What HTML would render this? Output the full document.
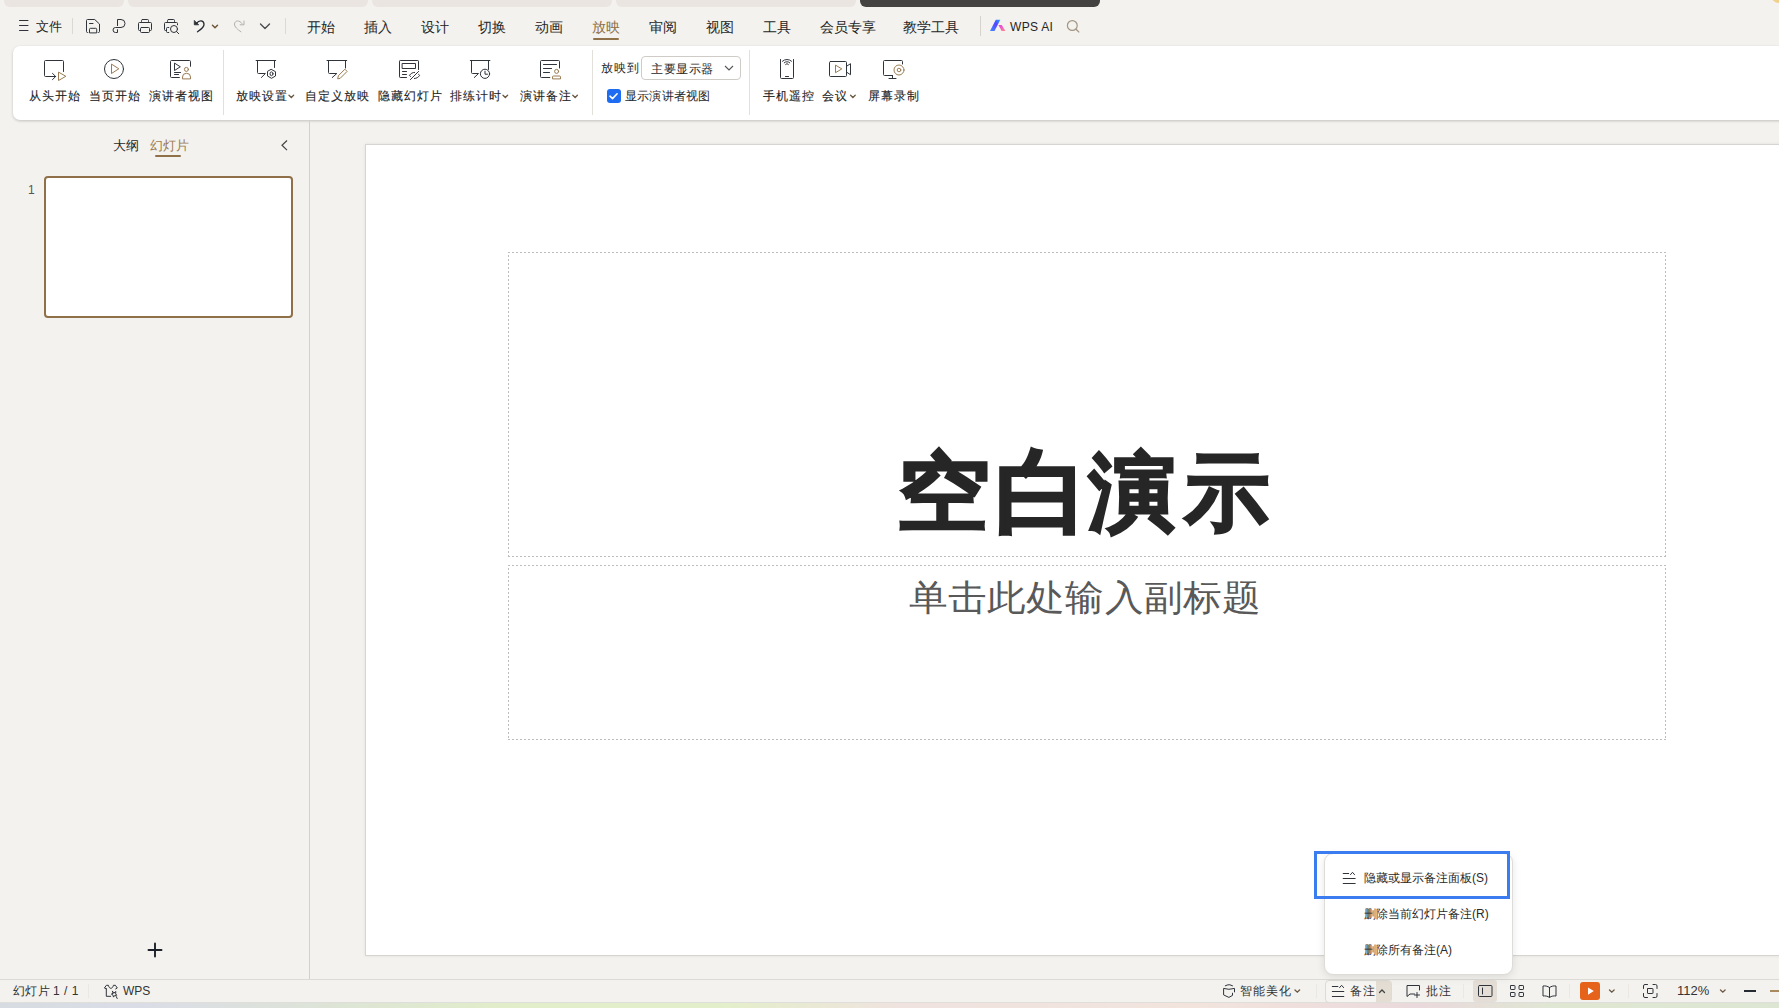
<!DOCTYPE html>
<html><head><meta charset="utf-8">
<style>
*{box-sizing:border-box;margin:0;padding:0}
html,body{width:1779px;height:1008px;overflow:hidden;background:#f3f2ee;font-family:"Liberation Sans",sans-serif;color:#262626}
.a{position:absolute}
.t{position:absolute;white-space:nowrap;line-height:1}
.tab{position:absolute;top:0;height:7px;background:#eae5e0;border-radius:0 0 6px 6px}
.sep{position:absolute;width:1px;background:#dcd8d2}
svg{position:absolute;overflow:visible}
.ic{fill:none;stroke:#2f333a;stroke-width:1}
.br{fill:none;stroke:#9a7b52;stroke-width:1}
.m{font-size:14px;top:20px;color:#262626}
.rl{font-size:12px;letter-spacing:1px;top:90px;color:#1f1f1f;-webkit-text-stroke:0.12px #1f1f1f}
</style></head><body>
<!-- top tabs -->
<div class="tab" style="left:4px;width:120px"></div>
<div class="tab" style="left:128px;width:240px"></div>
<div class="tab" style="left:372px;width:240px"></div>
<div class="tab" style="left:616px;width:240px"></div>
<div class="tab" style="left:860px;width:240px;background:#454341"></div>
<div class="a" style="left:1771px;top:-5px;width:16px;height:8px;border-radius:0 0 8px 8px;background:linear-gradient(200deg,#c53a3a 30%,#f2cf8a 45%)"></div>


<div class="t m" style="left:36px;font-size:13px;top:20px">文件</div>
<div class="sep" style="left:72px;top:18px;height:16px"></div>
<div class="sep" style="left:285px;top:18px;height:16px"></div>
<div class="t m" style="left:307px">开始</div>
<div class="t m" style="left:364px">插入</div>
<div class="t m" style="left:421px">设计</div>
<div class="t m" style="left:478px">切换</div>
<div class="t m" style="left:535px">动画</div>
<div class="t m" style="left:592px;color:#8f7048">放映</div>
<div class="a" style="left:593px;top:38px;width:26px;height:2px;background:#8f7048;border-radius:1px"></div>
<div class="t m" style="left:649px">审阅</div>
<div class="t m" style="left:706px">视图</div>
<div class="t m" style="left:763px">工具</div>
<div class="t m" style="left:820px">会员专享</div>
<div class="t m" style="left:903px">教学工具</div>
<div class="sep" style="left:980px;top:16px;height:20px;background:#d6d2cc"></div>
<div class="t m" style="left:1010px;font-size:12px;top:21px;letter-spacing:0.3px">WPS AI</div>
<svg style="left:0;top:0" width="10" height="10">
<g class="ic" stroke-linecap="round" stroke-linejoin="round">
 <path d="M19.5 20.5h8.5M19.5 25.5h8.5M19.5 30.5h8.5"/>
 <path d="M87.8 32.5h-0.3a1 1 0 0 1-1-1V20.5a1 1 0 0 1 1-1h7.2l4.8 4.5v7.5a1 1 0 0 1-1 1h-0.3M89.5 32.5v-3.2a1 1 0 0 1 1-1h5.2a1 1 0 0 1 1 1v3.2zM89.5 23.5h3.5"/>
 <path d="M117.5 25.6V19.5H121a4 4 0 0 1 0 8H115.5a2.5 2.5 0 0 0 0 5H117.5V29.7"/>
 <rect x="141.5" y="19.5" width="7" height="3" rx="1"/>
 <path d="M140.5 30.5h-1a1 1 0 0 1-1-1v-6a1 1 0 0 1 1-1h11a1 1 0 0 1 1 1v6a1 1 0 0 1-1 1h-1"/>
 <rect x="140.5" y="27.5" width="9" height="5" rx="1"/>
 <rect x="167.5" y="19.5" width="7" height="3" rx="1"/>
 <path d="M166.5 30.5h-1a1 1 0 0 1-1-1v-6a1 1 0 0 1 1-1h11a1 1 0 0 1 1 1v1.3M168.8 27.5h-1.3a1 1 0 0 0-1 1v3a1 1 0 0 0 1 1h1.3"/>
 <circle cx="174" cy="29" r="3.5"/><path d="M176.5 31.5l2.2 2.2"/>
 <path d="M196.5 23.5c2.5-3.5 7-3.5 7.5 0.5c0.3 2.5-3 5.5-6.5 7.8" stroke="#262b33" stroke-width="1.3"/>
 <path d="M194.3 20.8v4h4z" fill="#262b33" stroke="#262b33" stroke-width="0.8"/>
 <path d="M212.5 25.3l2.5 2.4l2.5-2.4" stroke="#6e5638" stroke-width="1.5"/>
 <path d="M242 23.5c-2.5-3.5-7-3.5-7.5 0.5c-0.3 2.5 3 5.5 6.5 7.8" stroke="#b0b0b0" stroke-width="1"/>
 <path d="M244 21v3.8h-3.8" stroke="#b0b0b0" stroke-width="1"/>
 <path d="M260.5 24l4.5 4.5l4.5-4.5" stroke="#4a4d52" stroke-width="1.4"/>
</g>
<defs><linearGradient id="ga" x1="0" y1="1" x2="1" y2="0"><stop offset="0" stop-color="#3f8cff"/><stop offset="0.6" stop-color="#5642ff"/><stop offset="1" stop-color="#1fa6ff"/></linearGradient>
<linearGradient id="gb" x1="0" y1="0" x2="1" y2="1"><stop offset="0" stop-color="#e23cf0"/><stop offset="1" stop-color="#ff8a8a"/></linearGradient></defs>
<path d="M990 31h4.5l5.8-11.3h-4.5z" fill="url(#ga)"/>
<path d="M998.5 25h3.3l3.6 6h-3.8z" fill="url(#gb)"/>
<circle cx="1072.3" cy="25.5" r="4.9" fill="none" stroke="#a39683" stroke-width="1.2"/><path d="M1075.8 29l3.4 3.4" stroke="#a39683" stroke-width="1.3"/>
</svg>



<div class="a" style="left:13px;top:46px;width:1800px;height:74px;background:#fff;border-radius:7px;box-shadow:0 1px 3px rgba(0,0,0,.2)"></div>
<div class="t rl" style="left:29px">从头开始</div>
<div class="t rl" style="left:89px">当页开始</div>
<div class="t rl" style="left:149px">演讲者视图</div>
<div class="sep" style="left:223px;top:50px;height:65px;background:#e3e0db"></div>
<div class="t rl" style="left:236px">放映设置</div>
<div class="t rl" style="left:305px">自定义放映</div>
<div class="t rl" style="left:378px">隐藏幻灯片</div>
<div class="t rl" style="left:450px">排练计时</div>
<div class="t rl" style="left:520px">演讲备注</div>
<div class="sep" style="left:592px;top:50px;height:65px;background:#e3e0db"></div>
<div class="t" style="left:601px;top:62px;font-size:12px;letter-spacing:1px">放映到</div>
<div class="a" style="left:641px;top:56px;width:100px;height:24px;border:1px solid #cfccc8;border-radius:4px"></div>
<div class="t" style="left:651px;top:63px;font-size:12px;letter-spacing:0.5px">主要显示器</div>
<div class="a" style="left:607px;top:89px;width:14px;height:14px;background:#1d6cf2;border-radius:3px"></div>
<div class="t" style="left:625px;top:90px;font-size:12px;letter-spacing:0.2px">显示演讲者视图</div>
<div class="sep" style="left:749px;top:50px;height:65px;background:#e3e0db"></div>
<div class="t rl" style="left:763px">手机遥控</div>
<div class="t rl" style="left:822px">会议</div>
<div class="t rl" style="left:868px">屏幕录制</div>
<svg style="left:0;top:0" width="10" height="10">
<g class="ic" stroke-linejoin="round" stroke-linecap="round">
 <path d="M63.5 71.5V61.5a1 1 0 0 0-1-1H45.5a1 1 0 0 0-1 1V75.5a1 1 0 0 0 1 1H55.7M52.5 73.4l3.2 3.1l-3.2 3.1"/>
 <path class="br" d="M58.5 72.5v8l7-4z"/>
 <circle cx="114" cy="69" r="9.5"/>
 <path class="br" d="M111.5 64.5v9l7-4.5z"/>
 <path d="M190.5 66.3V61.5a1 1 0 0 0-1-1H171.5a1 1 0 0 0-1 1V76.5a1 1 0 0 0 1 1H179.4M174.5 63.5v7l5.5-3.5z M174.5 72.5h6M174.5 74.5h4"/>
 <circle class="br" cx="186.4" cy="69.4" r="2"/><path class="br" d="M182.5 78.5v-1.5a4 3.7 0 0 1 8 0v1.5z"/>
 <path d="M256.1 60.5h19.6M257.5 60.5V72.5a1 1 0 0 0 1 1H265.4l-4 4M274.5 60.5v7"/>
 <path d="M271.5 69.5l4 2.2v4.3l-4 2.3l-4-2.3v-4.3z"/><ellipse cx="271.5" cy="73.8" rx="1.5" ry="1.9"/>
 <path d="M327 60.5h19.7M328.5 60.5V72.5a1 1 0 0 0 1 1H336.8l-4.5 4M345.5 60.5v7.5"/>
 <path class="br" d="M337.8 78.5l0.5-2.7l6.6-6.6l2.2 2.2l-6.6 6.6z"/>
 <path d="M418.5 69.5V61.2a0.7 0.7 0 0 0-0.7-0.7H400.2a0.7 0.7 0 0 0-0.7 0.7V76.8a0.7 0.7 0 0 0 0.7 0.7H406.5M402.5 63.5h13v5h-13z M402.5 71.5h4M402.5 74.5h4"/>
 <path d="M410.6 76.5l-1.2-1.1c1.5-2 3.2-3 5.2-3M418.5 74.3l1.2 1.1c-1.5 2-3.2 3.1-5.3 3.1M410.4 79.6l8.2-8.2"/>
 <path d="M470.3 60.5h19.6M471.5 60.5V72.5a1 1 0 0 0 1 1H478.5l-4.2 4M488.5 60.5v9"/>
 <circle cx="485" cy="73.8" r="4.6"/><path d="M485 71.2v3h2.5"/>
 <path d="M559.5 68V61.5a1 1 0 0 0-1-1H541.5a1 1 0 0 0-1 1V76.5a1 1 0 0 0 1 1H549.8M543.5 64.5h13M543.5 68.5h8M543.5 72.5h6"/>
 <circle class="br" cx="556.6" cy="71.4" r="2"/><path class="br" d="M552.5 78.5v-1.5a1 1 0 0 1 1-1h6a1 1 0 0 1 1 1v1.5z"/>
 <path d="M780.5 59.5v18a1 1 0 0 0 1 1h11a1 1 0 0 0 1-1v-18 M785.5 76.5h3"/>
 <path d="M782.5 61.2a6.5 6.5 0 0 1 9 0 M784.2 62.8a3.9 3.9 0 0 1 5.6 0 M785.6 64.4a1.8 1.8 0 0 1 2.8 0"/>
 <path d="M830.5 61.5h15a1 1 0 0 1 1 1v13a1 1 0 0 1-1 1h-15a1 1 0 0 1-1-1v-13a1 1 0 0 1 1-1z M846.5 66.3l4-2.6v11l-4-2.6"/>
 <path class="br" d="M835.5 65.5v7.2l6-3.6z"/>
 <path d="M902.5 64V61.5a1 1 0 0 0-1-1H884.5a1 1 0 0 0-1 1V74.5a1 1 0 0 0 1 1H892.5M892.5 75.5v3M889 78.5h7"/>
 <circle class="br" cx="899" cy="70" r="5"/><circle class="br" cx="899" cy="70" r="1.8"/>
</g>
<g fill="none" stroke="#6b5842" stroke-width="1.3" stroke-linecap="round">
 <path d="M289 95.3l2.3 2.2l2.3-2.2M503 95.3l2.3 2.2l2.3-2.2M572.8 95.3l2.3 2.2l2.3-2.2M850.6 95.3l2.3 2.2l2.3-2.2"/>
</g>
<path d="M725 66l4 4l4-4" fill="none" stroke="#555" stroke-width="1.1"/>
<path d="M610 96.2l2.5 2.4l4.6-4.8" fill="none" stroke="#fff" stroke-width="1.6" stroke-linecap="round" stroke-linejoin="round"/>
</svg>


<!-- left panel -->
<div class="a" style="left:309px;top:120px;width:1px;height:859px;background:#d3d1cd"></div>
<div class="t" style="left:113px;top:139px;font-size:13px;color:#262626">大纲</div>
<div class="t" style="left:150px;top:139px;font-size:13px;color:#9a7b52">幻灯片</div>
<div class="a" style="left:155px;top:155px;width:26px;height:2px;background:#8f7048;border-radius:1px"></div>
<svg style="left:0;top:0" width="10" height="10"><path d="M287 140.5l-5 4.8l5 4.8" fill="none" stroke="#444" stroke-width="1.2"/></svg>
<div class="t" style="left:28px;top:184px;font-size:12px;color:#555">1</div>
<div class="a" style="left:44px;top:176px;width:249px;height:142px;border:2px solid #8f7048;border-radius:4px;background:#fff"></div>
<svg style="left:0;top:0" width="10" height="10"><path d="M155 943.5v13M148.5 950h13" fill="none" stroke="#1c2029" stroke-width="1.9" stroke-linecap="round"/></svg>

<!-- slide -->
<div class="a" style="left:365px;top:144px;width:1500px;height:812px;background:#fff;border:1px solid #d6d5d1;box-shadow:0 0 3px rgba(0,0,0,.08)"></div>
<svg style="left:0;top:0" width="10" height="10"><g fill="none" stroke="#bdbdbd" stroke-width="1" stroke-dasharray="2 2">
<path d="M508 252.5H1666M508 556.5H1666M508.5 255V557M1665.5 255V557"/>
<path d="M508 565.5H1666M508 739.5H1666M508.5 568V740M1665.5 568V740"/></g></svg>
<div class="t" style="left:897px;top:438px;font-size:96px;font-weight:bold;color:#262626;-webkit-text-stroke:2.8px #262626;transform-origin:0 97px;transform:scale(0.975,0.88)">空</div><div class="t" style="left:995px;top:444px;font-size:96px;font-weight:bold;color:#262626;-webkit-text-stroke:2.8px #262626;transform-origin:0 97px;transform-origin:0 49px;transform:scale(0.975,0.955)">白</div><div class="t" style="left:1089px;top:438px;font-size:96px;font-weight:bold;color:#262626;-webkit-text-stroke:2.8px #262626;transform-origin:0 97px;transform:scale(0.905,0.88)">演</div><div class="t" style="left:1185px;top:438px;font-size:96px;font-weight:bold;color:#262626;-webkit-text-stroke:2.8px #262626;transform-origin:0 97px;transform:scale(0.88,0.88)">示</div>
<div class="t" id="sub" style="left:909px;top:576px;font-size:40px;color:#595959;transform-origin:0 39px;transform:scale(0.978,0.91)">单击此处输入副标题</div>


<div class="a" style="left:0;top:979px;width:1779px;height:1px;background:#dcdad6"></div>
<div class="t" style="left:13px;top:985px;font-size:12px;letter-spacing:0.3px;color:#333">幻灯片</div><div class="t" style="left:53px;top:985px;font-size:12px;color:#333;word-spacing:1px">1 / 1</div>
<div class="sep" style="left:88px;top:984px;height:14px;background:#ebe8e4"></div>
<div class="t" style="left:123px;top:985px;font-size:12px;color:#333">WPS</div>
<div class="t" style="left:1240px;top:985px;font-size:12px;letter-spacing:1px;color:#333">智能美化</div>
<div class="sep" style="left:1316px;top:984px;height:14px;background:#ebe8e4"></div>
<div class="a" style="left:1325px;top:980px;width:67px;height:23px;border:1px solid #dedad4;border-radius:4px;background:#f6f5f2;overflow:hidden"><div class="a" style="left:50px;top:0;width:17px;height:23px;background:#e3ddd4"></div></div>
<div class="t" style="left:1350px;top:985px;font-size:12px;letter-spacing:1px;color:#333">备注</div>
<div class="t" style="left:1426px;top:985px;font-size:12px;letter-spacing:1px;color:#333">批注</div>
<div class="sep" style="left:1463px;top:984px;height:14px;background:#ebe8e4"></div>
<div class="a" style="left:1473px;top:980px;width:24px;height:22px;border-radius:3px;background:#e4ded6"></div>
<div class="sep" style="left:1569px;top:984px;height:14px;background:#ebe8e4"></div>
<div class="a" style="left:1580px;top:982px;width:20px;height:18px;border-radius:3px;background:#e5631b"></div>
<div class="sep" style="left:1628px;top:984px;height:14px;background:#ebe8e4"></div>
<div class="t" style="left:1677px;top:984px;font-size:13px;color:#333">112%</div>
<svg style="left:0;top:0" width="10" height="10">
<g class="ic" stroke-linecap="round" stroke-linejoin="round">
 <path d="M106.3 988.8V996.3h4.4M106.3 988.8l-1.9-0.8l2-2.7h2c0.5 2 1.4 3 2.5 3s2-1 2.5-3h2l1.9 2.7l-1.6 0.9"/>
 <path d="M112.5 991.3l1.2 1.9l2.2-1.7l-0.3 2.4l1.2 1.3l-2.1 0.3l-1.2 1.6l-0.6-2.2l-1.5-0.8l1.5-0.8z M116.2 996.5l1 2"/>
 <path d="M1225.3 985.8l2.6-1h2l2.6 1M1234.5 991.9v-3.5l-5.6 0.9l-5.3-0.9v6.5l5.3 2.5l3.6-2v-2.2"/>
 <path d="M1332.3 986.5h5.6M1332.3 991.5h11.5M1332.3 996.5h11.5M1339.6 987.6l2-2.3l2 2.3"/>
 <path d="M1419.5 990v-4.5h-12.5v11l3-2.5h4.5M1417 992.5v5M1414.5 995h5"/>
 <rect x="1478.5" y="985.5" width="13.5" height="11" rx="1"/><path d="M1482.5 988v6"/>
 <rect x="1510.5" y="985.5" width="4.5" height="4" rx="0.6"/><rect x="1519" y="985.5" width="4.5" height="4" rx="0.6"/>
 <rect x="1510.5" y="992.5" width="4.5" height="4" rx="0.6"/><rect x="1519" y="992.5" width="4.5" height="4" rx="0.6"/>
 <path d="M1549.5 987.5c-2-1.5-4.5-1.8-6.5-1.5v10c2-0.3 4.5 0 6.5 1.5c2-1.5 4.5-1.8 6.5-1.5v-10c-2-0.3-4.5 0-6.5 1.5zM1549.5 987.5v9.5"/>
 <path d="M1643.5 988.5v-2.5a1.5 1.5 0 0 1 1.5-1.5h2.5M1653 984.5h2.5a1.5 1.5 0 0 1 1.5 1.5v2.5M1657 993.5v2.5a1.5 1.5 0 0 1-1.5 1.5H1653M1647.5 997.5H1645a1.5 1.5 0 0 1-1.5-1.5v-2.5"/>
 <rect x="1647.5" y="988.5" width="5.5" height="5" rx="0.5"/>
</g>
<g fill="none" stroke="#6b5842" stroke-width="1.3" stroke-linecap="round">
 <path d="M1295 990l2.3 2.2l2.3-2.2M1609.5 990l2.3 2.2l2.3-2.2M1720.5 990l2.3 2.2l2.3-2.2"/>
 <path d="M1379.5 992.5l2.5-2.5l2.5 2.5" stroke="#444"/>
</g>
<path d="M1588 987.5v7.2l5.8-3.6z" fill="#fff"/>
<path d="M1744 991h12" stroke="#262a33" stroke-width="2"/>
<path d="M1770 991h12" stroke="#a88a5e" stroke-width="2"/>
</svg>
<div class="a" style="left:0;top:1002px;width:1779px;height:1px;background:#e0dedb"></div>
<div class="a" style="left:0;top:1003px;width:1779px;height:5px;background:linear-gradient(90deg,#d6dce2 0,#dbdde6 150px,#dde4d6 330px,#e2eec9 520px,#e3efca 720px,#f0e3df 900px,#f2e4dd 1200px,#ead9dc 1420px,#dfe7d3 1560px,#dde6d2 1779px)"></div>



<div class="a" style="left:1324px;top:853px;width:189px;height:122px;background:#fff;border-radius:9px;border:1px solid #dedcd8;box-shadow:0 2px 8px rgba(0,0,0,.10)"></div>
<div class="a" style="left:1314px;top:851px;width:196px;height:48px;border:3px solid #3b7cf0"></div>
<svg style="left:0;top:0" width="10" height="10"><g fill="none" stroke="#333" stroke-width="1"><path d="M1343.2 873.5h5.5M1343.2 878.5h12M1343.2 883.5h12M1350.5 874.6l2-2.3l2 2.3" stroke="#2f333a" stroke-linecap="round"/></g></svg>
<div class="t" style="left:1364px;top:872px;font-size:12px;color:#2a2a2a">隐藏或显示备注面板(S)</div>
<div class="t" style="left:1364px;top:908px;font-size:12px;color:#2a2a2a">删除当前幻灯片备注(R)</div>
<div class="t" style="left:1364px;top:944px;font-size:12px;color:#2a2a2a">删除所有备注(A)</div>

</body></html>
